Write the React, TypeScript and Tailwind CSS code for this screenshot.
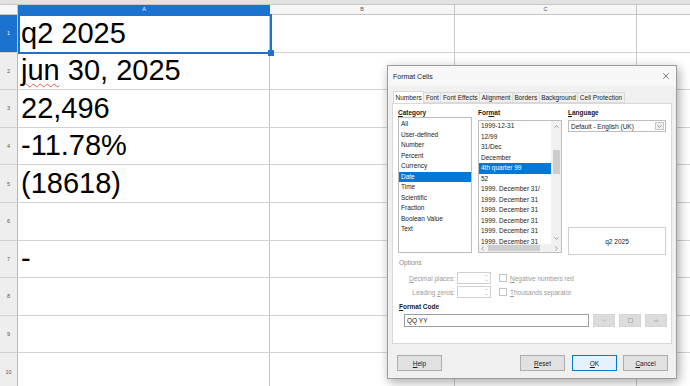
import { X, ChevronDown, ChevronUp, ChevronLeft, ChevronRight } from "lucide-react";

const cells = ["q2 2025", "jun 30, 2025", "22,496", "-11.78%", "(18618)", "", "-", "", "", ""];
const categories = ["All", "User-defined", "Number", "Percent", "Currency", "Date", "Time", "Scientific", "Fraction", "Boolean Value", "Text"];
const formats = [
  "1999-12-31",
  "12/99",
  "31/Dec",
  "December",
  "4th quarter 99",
  "52",
  "1999. December 31/",
  "1999. December 31",
  "1999. December 31",
  "1999. December 31",
  "1999. December 31",
  "1999. December 31",
];
const tabs = ["Numbers", "Font", "Font Effects", "Alignment", "Borders", "Background", "Cell Protection"];

function Key({ k, rest }: { k: string; rest: string }) {
  return (
    <span>
      <span className="underline">{k}</span>
      {rest}
    </span>
  );
}

function Spin() {
  return (
    <div className="flex h-[12px] w-[34px] border border-[#cfcfcf] bg-white">
      <div className="flex-1" />
      <div className="flex w-[8px] flex-col items-center justify-center text-[#b0b0b0]">
        <ChevronUp size={5} strokeWidth={3} />
        <ChevronDown size={5} strokeWidth={3} />
      </div>
    </div>
  );
}

function Button({ children, focus }: { children: React.ReactNode; focus?: boolean }) {
  return (
    <div
      className={
        focus
          ? "flex h-[16px] w-[45px] items-center justify-center border border-[#0078d7] bg-[#e5f1fb]"
          : "flex h-[16px] w-[45px] items-center justify-center border border-[#adadad] bg-[#e1e1e1]"
      }
    >
      {children}
    </div>
  );
}

function FormatCells() {
  return (
    <div className="absolute left-[387px] top-[65px] flex h-[314px] w-[290px] flex-col border border-[#9c9c9c] bg-[#f0f0f0] text-[6.5px] leading-[9px] text-[#1a1a1a] shadow-[2px_3px_10px_rgba(0,0,0,0.35)]">
      {/* title bar */}
      <div className="flex h-[20px] items-center justify-between bg-[#f7f7f7] pl-[5px] pr-[5px]">
        <span className="text-[7px]">Format Cells</span>
        <X size={10} strokeWidth={1.4} className="text-[#222]" />
      </div>

      {/* tabs */}
      <div className="ml-[5px] mt-[5px] flex h-[12px] items-end">
        {tabs.map((t, i) => (
          <div
            key={t}
            className={
              i === 0
                ? "flex h-[12px] items-center border border-b-0 border-[#d9d9d9] bg-white px-[1.5px]"
                : "flex h-[11px] items-center border-y border-r border-[#d9d9d9] bg-[#f0f0f0] px-[1.5px]"
            }
          >
            {t}
          </div>
        ))}
      </div>

      {/* panel */}
      <div className="mx-[4px] flex h-[241px] flex-col border border-[#d9d9d9] bg-white pl-[5px]">
        <div className="mt-[4px] flex gap-[6px]">
          {/* category */}
          <div className="flex w-[74px] flex-col">
            <div className="font-bold">
              <Key k="C" rest="ategory" />
            </div>
            <div className="h-[136px] border border-[#bdbdbd] pt-[1px]">
              {categories.map((c) => (
                <div
                  key={c}
                  className={c === "Date" ? "h-[10.5px] bg-[#0078d7] pl-[2px] leading-[10.5px] text-white" : "h-[10.5px] pl-[2px] leading-[10.5px]"}
                >
                  {c}
                </div>
              ))}
            </div>
          </div>

          {/* format */}
          <div className="flex w-[84px] flex-col">
            <div className="font-bold">
              For<span className="underline">m</span>at
            </div>
            <div className="mt-[3px] flex h-[133px] flex-col border border-[#bdbdbd]">
              <div className="flex min-h-0 flex-1">
                <div className="flex-1 overflow-hidden">
                  {formats.map((f, i) => (
                    <div
                      key={i}
                      className={
                        i === 4
                          ? "h-[10.5px] whitespace-nowrap bg-[#0078d7] pl-[2px] leading-[10.5px] text-white"
                          : "h-[10.5px] whitespace-nowrap pl-[2px] leading-[10.5px]"
                      }
                    >
                      {f}
                    </div>
                  ))}
                </div>
                <div className="flex w-[10px] flex-col items-center bg-[#f0f0f0] text-[#606060]">
                  <ChevronUp size={7} strokeWidth={2} className="mt-[2px]" />
                  <div className="mt-[20px] h-[24px] w-[7px] bg-[#cdcdcd]" />
                  <div className="flex-1" />
                  <ChevronDown size={7} strokeWidth={2} className="mb-[2px]" />
                </div>
              </div>
              <div className="flex h-[8px] items-center bg-[#f0f0f0] text-[#606060]">
                <ChevronLeft size={7} strokeWidth={2} />
                <div className="ml-[2px] h-[6px] w-[52px] bg-[#cdcdcd]" />
                <div className="flex-1" />
                <ChevronRight size={7} strokeWidth={2} className="mr-[1px]" />
              </div>
            </div>
          </div>

          {/* language */}
          <div className="flex w-[98px] flex-col">
            <div className="font-bold">
              <Key k="L" rest="anguage" />
            </div>
            <div className="mt-[3px] flex h-[12px] items-center border border-[#bdbdbd] bg-white pl-[2px]">
              <span className="flex-1">Default - English (UK)</span>
              <div className="m-[1px] flex h-[8px] w-[9px] items-center justify-center border border-[#c8c8c8] bg-[#f0f0f0] text-[#555]">
                <ChevronDown size={7} strokeWidth={2} />
              </div>
            </div>
            <div className="mt-[95px] flex h-[28px] items-center justify-center border border-[#cfcfcf]">q2 2025</div>
          </div>
        </div>

        {/* options */}
        <div className="mt-[3px] pl-[1px] text-[#8a8a8a]">Options</div>
        <div className="mt-[5px] flex items-center text-[#9a9a9a]">
          <div className="w-[57px] text-right">
            <Key k="D" rest="ecimal places:" />
          </div>
          <div className="ml-[2px]">
            <Spin />
          </div>
          <div className="ml-[8px] h-[8px] w-[8px] border border-[#c4c4c4]" />
          <div className="ml-[3px]">
            <Key k="N" rest="egative numbers red" />
          </div>
        </div>
        <div className="mt-[2px] flex items-center text-[#9a9a9a]">
          <div className="w-[57px] text-right">
            Leading <Key k="z" rest="eros:" />
          </div>
          <div className="ml-[2px]">
            <Spin />
          </div>
          <div className="ml-[8px] h-[8px] w-[8px] border border-[#c4c4c4]" />
          <div className="ml-[3px]">
            <Key k="T" rest="housands separator" />
          </div>
        </div>

        {/* format code */}
        <div className="mt-[4px] pl-[1px] font-bold">
          <Key k="F" rest="ormat Code" />
        </div>
        <div className="mt-[3px] flex items-center gap-[4px]">
          <div className="ml-[6px] flex h-[13px] w-[185px] items-center border border-[#9c9c9c] pl-[2px]">QQ YY</div>
          <div className="flex h-[13px] w-[22px] items-center justify-center border border-[#d4d4d4] bg-[#dcdcdc] text-[#a8a8a8]">
            <ChevronDown size={7} strokeWidth={2} />
          </div>
          <div className="flex h-[13px] w-[22px] items-center justify-center border border-[#d4d4d4] bg-[#dcdcdc]">
            <div className="h-[5px] w-[5px] border border-[#b8b8b8]" />
          </div>
          <div className="flex h-[13px] w-[22px] items-center justify-center border border-[#d4d4d4] bg-[#dcdcdc] text-[4px] text-[#a0a0a0]">
            ab
          </div>
        </div>
      </div>

      {/* buttons */}
      <div className="mt-[11px] flex items-center pl-[9px] pr-[8px]">
        <Button>
          <Key k="H" rest="elp" />
        </Button>
        <div className="flex-1" />
        <Button>
          <Key k="R" rest="eset" />
        </Button>
        <div className="w-[7px]" />
        <Button focus>
          <Key k="O" rest="K" />
        </Button>
        <div className="w-[6px]" />
        <Button>
          <Key k="C" rest="ancel" />
        </Button>
      </div>
    </div>
  );
}

export default function App() {
  return (
    <div className="relative h-[386px] w-[690px] overflow-hidden bg-white font-['Liberation_Sans',Arial,sans-serif]">
      <div className="h-[5px] border-b border-[#c8c8c8] bg-[#e2e2e2]" />
      {/* column headers */}
      <div className="flex h-[10px] border-b border-[#c4c4c4] bg-[#f6f6f6] text-[5.5px] leading-[9px] text-[#555]">
        <div className="w-[18px] shrink-0 border-r border-[#c4c4c4]" />
        <div className="w-[252px] shrink-0 bg-[#1c72cf] text-center text-white">A</div>
        <div className="w-[185px] shrink-0 border-r border-[#c4c4c4] text-center">B</div>
        <div className="w-[182px] shrink-0 border-r border-[#c4c4c4] text-center">C</div>
        <div className="flex-1" />
      </div>

      {/* rows */}
      {cells.map((v, i) => (
        <div key={i} className="flex h-[37.6px] border-b border-[#d2d2d2]">
          <div
            className={
              i === 0
                ? "flex w-[18px] shrink-0 items-center justify-center border-r border-[#c4c4c4] bg-[#1c72cf] text-[5.5px] text-white"
                : "flex w-[18px] shrink-0 items-center justify-center border-r border-[#b8b8b8] bg-[#eeeeee] text-[5.5px] text-[#555]"
            }
          >
            {i + 1}
          </div>
          <div className="flex w-[252px] shrink-0 items-end border-r border-[#c4c4c4] pb-[4px] pl-[3px] text-[29px] leading-[29px] text-black">
            {i === 1 ? (
              <span>
                <span className="underline decoration-[#e05a5a] decoration-wavy decoration-1 underline-offset-[3px]">jun</span> 30, 2025
              </span>
            ) : (
              v
            )}
          </div>
          <div className="w-[185px] shrink-0 border-r border-[#cacaca]" />
          <div className="w-[182px] shrink-0 border-r border-[#cacaca]" />
          <div className="flex-1" />
        </div>
      ))}

      {/* selected cell */}
      <div className="absolute left-[18px] top-[14px] h-[40px] w-[254px] border-2 border-[#1c72cf]">
        <div className="absolute -bottom-[4px] -right-[4px] h-[6px] w-[6px] bg-[#1c72cf]" />
      </div>

      <FormatCells />
    </div>
  );
}
